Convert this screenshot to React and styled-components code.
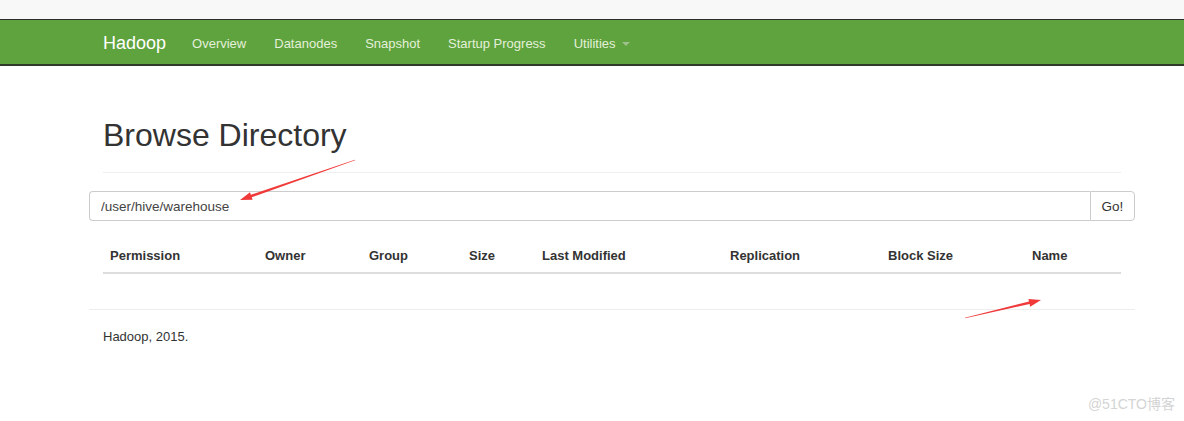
import React from 'react';
import styled, { createGlobalStyle } from 'styled-components';

const GlobalStyle = createGlobalStyle`
  html, body {
    margin: 0;
    padding: 0;
    background: #fff;
  }
  body {
    font-family: "Liberation Sans", Arial, sans-serif;
    color: #333;
  }
`;

const Page = styled.div`
  position: relative;
  width: 1184px;
  height: 421px;
  overflow: hidden;
  background: #fff;
`;

const TopStrip = styled.div`
  height: 19px;
  background: #f8f8f8;
  border-bottom: 1px solid #2d2d2d;
`;

const Navbar = styled.nav`
  height: 46px;
  background: #5fa33e;
  border-bottom: 2px solid #2f3a2a;
  display: flex;
  align-items: center;
  padding-left: 103px;
  padding-top: 2px;
  box-sizing: border-box;
`;

const Brand = styled.span`
  font-size: 18px;
  color: #fff;
  margin-right: 26px;
`;

const NavLinks = styled.ul`
  display: flex;
  gap: 28px;
  list-style: none;
  margin: 0;
  padding: 0;
`;

const NavLink = styled.li`
  font-size: 13px;
  color: #e4f0da;
  display: flex;
  align-items: center;
`;

const Caret = styled.span`
  display: inline-block;
  width: 0;
  height: 0;
  margin-left: 6px;
  margin-top: 2px;
  border-top: 4px solid #9fbf8c;
  border-left: 4px solid transparent;
  border-right: 4px solid transparent;
`;

const Container = styled.div`
  width: 1046px;
  margin-left: 89px;
`;

const PageHeader = styled.div`
  margin: 52px 14px 18px;
  padding-bottom: 19px;
  border-bottom: 1px solid #eee;
`;

const Title = styled.h1`
  margin: 0;
  font-size: 32px;
  font-weight: 400;
  line-height: 35px;
  color: #333;
`;

const InputGroup = styled.div`
  display: flex;
  height: 30px;
`;

const PathInput = styled.input`
  flex: 1;
  height: 30px;
  box-sizing: border-box;
  border: 1px solid #ccc;
  border-right: none;
  border-radius: 4px 0 0 4px;
  padding: 0 11px;
  font-family: "Liberation Sans", Arial, sans-serif;
  font-size: 13.5px;
  color: #444;
  outline: none;
`;

const GoButton = styled.button`
  width: 45px;
  height: 30px;
  box-sizing: border-box;
  border: 1px solid #ccc;
  border-radius: 0 4px 4px 0;
  background: #fff;
  font-family: "Liberation Sans", Arial, sans-serif;
  font-size: 13.5px;
  color: #333;
  padding: 0;
`;

const Table = styled.table`
  width: 1018px;
  margin: 15px 14px 0;
  border-collapse: collapse;
  table-layout: fixed;
`;

const Th = styled.th`
  box-sizing: border-box;
  text-align: left;
  font-size: 13px;
  font-weight: 700;
  color: #333;
  padding: 12px 0 9px 7px;
  border-bottom: 2px solid #ddd;
  width: ${(p) => p.$w}px;
  white-space: nowrap;
`;

const Footer = styled.footer`
  margin-top: 35px;
  border-top: 1px solid #eee;
  padding: 19px 14px;
  font-size: 13px;
  color: #333;
`;

const Overlay = styled.svg`
  position: absolute;
  left: 0;
  top: 0;
  pointer-events: none;
`;

const Watermark = styled.div`
  position: absolute;
  right: 9px;
  bottom: 8px;
  font-family: "Liberation Sans", "Noto Sans CJK SC", sans-serif;
  font-size: 14px;
  color: #d4d4d4;
`;

const columns = [
  ['Permission', 155],
  ['Owner', 104],
  ['Group', 100],
  ['Size', 73],
  ['Last Modified', 188],
  ['Replication', 158],
  ['Block Size', 144],
  ['Name', 96],
];

const arrowPoly = (x1, y1, x2, y2, head = 12) => {
  const dx = x2 - x1;
  const dy = y2 - y1;
  const len = Math.hypot(dx, dy);
  const ux = dx / len;
  const uy = dy / len;
  const nx = -uy;
  const ny = ux;
  const bx = x2 - ux * head;
  const by = y2 - uy * head;
  const pts = [
    [x1 + nx * 0.3, y1 + ny * 0.3],
    [bx + nx * 1.3, by + ny * 1.3],
    [bx + nx * 4, by + ny * 4],
    [x2, y2],
    [bx - nx * 4, by - ny * 4],
    [bx - nx * 1.3, by - ny * 1.3],
    [x1 - nx * 0.3, y1 - ny * 0.3],
  ];
  return pts.map((p) => p.map((v) => v.toFixed(1)).join(',')).join(' ');
};

export default function App() {
  return (
    <Page>
      <GlobalStyle />
      <TopStrip />
      <Navbar>
        <Brand>Hadoop</Brand>
        <NavLinks>
          <NavLink>Overview</NavLink>
          <NavLink>Datanodes</NavLink>
          <NavLink>Snapshot</NavLink>
          <NavLink>Startup Progress</NavLink>
          <NavLink>
            Utilities
            <Caret />
          </NavLink>
        </NavLinks>
      </Navbar>
      <Container>
        <PageHeader>
          <Title>Browse Directory</Title>
        </PageHeader>
        <InputGroup>
          <PathInput defaultValue="/user/hive/warehouse" />
          <GoButton>Go!</GoButton>
        </InputGroup>
        <Table>
          <thead>
            <tr>
              {columns.map(([label, w]) => (
                <Th key={label} $w={w}>
                  {label}
                </Th>
              ))}
            </tr>
          </thead>
          <tbody />
        </Table>
        <Footer>Hadoop, 2015.</Footer>
      </Container>
      <Overlay width="1184" height="421">
        <polygon points={arrowPoly(355, 160, 240, 200)} fill="#f03a3a" />
        <polygon points={arrowPoly(965, 318, 1041, 300)} fill="#f03a3a" />
      </Overlay>
      <Watermark>@51CTO博客</Watermark>
    </Page>
  );
}
